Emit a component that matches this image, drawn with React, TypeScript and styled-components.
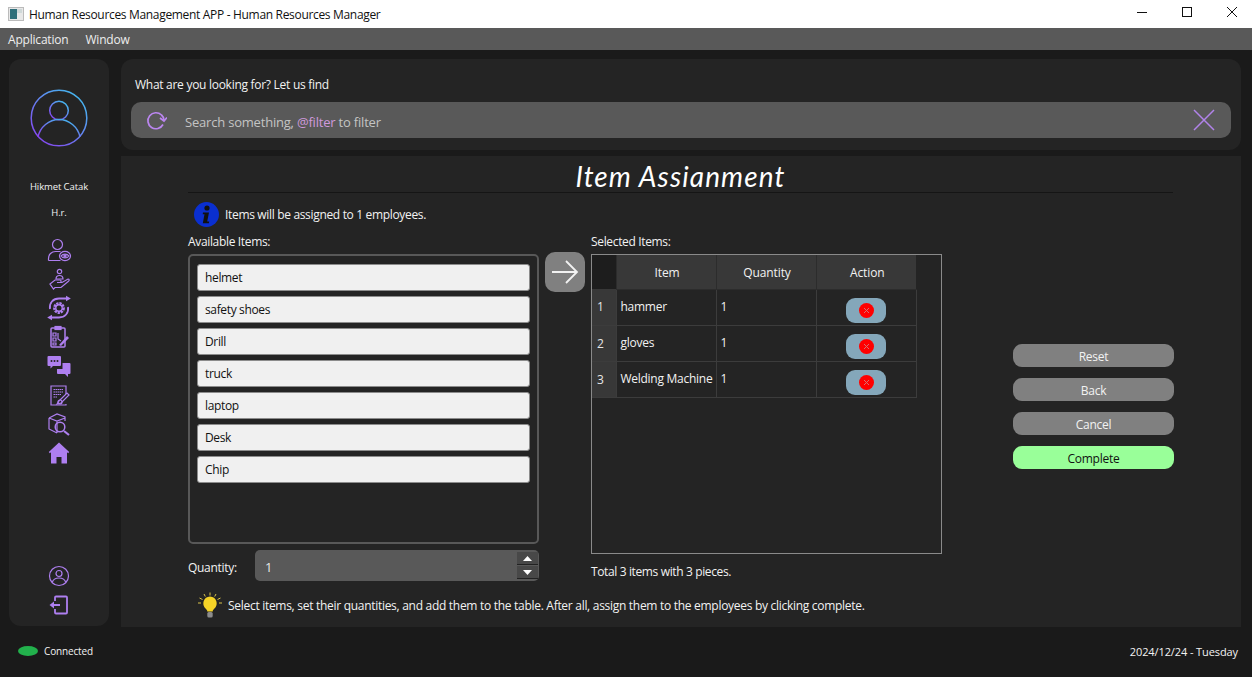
import React from "react";
import styled, { createGlobalStyle } from "styled-components";

const Global = createGlobalStyle`
  html, body { margin: 0; padding: 0; background: #1a1a1a; }
  * { box-sizing: border-box; }
  body { font-family: "Open Sans", "Liberation Sans", sans-serif; font-size: 12px; color: #f2f2f2; }
`;

const Page = styled.div`
  width: 1252px; height: 677px; display: flex; flex-direction: column; overflow: hidden; background: #1a1a1a;
`;
const TitleBar = styled.div`
  height: 28px; background: #fff; color: #111; display: flex; align-items: center; padding-left: 8px; flex: none;
`;
const TitleText = styled.span`
  margin-left: 5px; letter-spacing: -0.32px; flex: 1;
`;
const WinButton = styled.div`
  width: 40px; height: 24px; display: flex; align-items: center; justify-content: center;
`;
const WinButtons = styled.div`
  display: flex; gap: 5px; margin-bottom: 4px;
`;
const MenuBar = styled.div`
  height: 22px; background: #595959; display: flex; align-items: center; padding-left: 8px; gap: 17px; flex: none; color: #eee;
`;
const MenuItem = styled.span`letter-spacing: -0.2px;`;
const Body = styled.div`
  height: 577px; flex: none; display: flex; gap: 12px; padding: 9px 11px 0 9px;
`;
const Sidebar = styled.aside`
  width: 100px; height: 567px; background: #242424; border-radius: 12px; display: flex; flex-direction: column; align-items: center; padding-top: 30px; flex: none;
`;
const Avatar = styled.div`width: 58px; height: 58px; flex: none; display: flex;`;
const UserName = styled.div<{ $top: number }>`
  font-size: 9.5px; margin-top: ${(p) => p.$top}px; line-height: 14px; height: 14px; letter-spacing: -0.1px;
`;
const NavList = styled.nav`
  display: flex; flex-direction: column; align-items: center; margin-top: 15px;
`;
const NavIcon = styled.div`
  width: 26px; height: 29px; display: flex; align-items: center; justify-content: center; color: #ae7ff0;
`;
const BottomNav = styled.div`
  margin-top: auto; padding-bottom: 7px; display: flex; flex-direction: column; align-items: center;
`;
const MainCol = styled.div`
  flex: 1; display: flex; flex-direction: column; gap: 6px; min-width: 0;
`;
const SearchPanel = styled.section`
  height: 91px; background: #242424; border-radius: 12px; padding: 18px 10px 0; flex: none;
`;
const SearchLabel = styled.div`
  padding-left: 4px; line-height: 15px; letter-spacing: -0.28px;
`;
const SearchBar = styled.div`
  margin-top: 10px; height: 36px; background: #595959; border-radius: 10px; display: flex; align-items: center; padding: 0 16px 0 15px; color: #c4c4c4; font-size: 13px;
`;
const SearchText = styled.div`flex: 1; margin: 4px 0 0 18px; letter-spacing: -0.2px;`;
const Filter = styled.span`color: #cf99dc;`;
const Content = styled.main`
  height: 471px; background: #242424; padding: 0 68px 0 67px; display: flex; flex-direction: column; flex: none;
`;
const Heading = styled.h1`
  margin: 0; height: 37px; border-bottom: 1px solid #151515; text-align: center; font: italic 400 28px/41px Lato, "Open Sans", cursive; letter-spacing: 1.1px; color: #fff;
`;
const InfoRow = styled.div`
  display: flex; align-items: center; gap: 6px; padding-left: 6px; margin-top: 8px; height: 26px; letter-spacing: -0.33px;
`;
const Columns = styled.div`
  display: flex; align-items: flex-start; margin-top: 5px;
`;
const LeftCol = styled.div`width: 351px; flex: none;`;
const FieldLabel = styled.div`line-height: 16px; height: 20px; margin-top: 2px; letter-spacing: -0.34px;`;
const ItemList = styled.div`
  height: 290px; border: 2px solid #585858; border-radius: 5px; padding: 8px 7px; display: flex; flex-direction: column; gap: 5px;
`;
const ListItem = styled.div`
  height: 27px; background: #f0f0f0; color: #111; border: 1px solid #8c8c8c; border-radius: 3px; padding-left: 7px; line-height: 25px; flex: none; letter-spacing: -0.35px;
`;
const QuantityRow = styled.div`
  margin-top: 6px; display: flex; align-items: center; height: 31px;
`;
const QuantityLabel = styled.span`width: 67px; padding-top: 3px; letter-spacing: -0.3px;`;
const Spin = styled.div`
  flex: 1; height: 31px; background: #595959; border-radius: 5px; display: flex; align-items: center; padding-left: 10px; font-size: 13px; color: #e8e8e8; justify-content: space-between;
`;
const SpinValue = styled.span`padding-top: 2px;`;
const SpinButtons = styled.div`display: flex; flex-direction: column; gap: 1px; padding-right: 1px;`;
const SpinButton = styled.div`
  width: 21px; height: 13px; background: #484848; border-bottom: 1px solid #222; display: flex; align-items: center; justify-content: center;
`;
const ArrowCol = styled.div`width: 52px; flex: none; display: flex; justify-content: center; padding-top: 20px;`;
const ArrowButton = styled.div`
  width: 40px; height: 40px; border-radius: 10px; background: #808080; display: flex; align-items: center; justify-content: center;
`;
const MidCol = styled.div`width: 351px; flex: none;`;
const TableFrame = styled.div`height: 300px; border: 1px solid #8a8a8a;`;
const Grid = styled.table`
  border-collapse: collapse; table-layout: fixed; width: 324px;
`;
const CornerCell = styled.th`width: 24px; height: 34px; background: #1d1d1d; padding: 0; border: 0;`;
const HeadCell = styled.th`
  width: 100px; height: 34px; background: #383838; font-weight: 400; padding: 1px 0 0 2px; border-left: 1px solid #2c2c2c; border-bottom: 1px solid #2c2c2c; letter-spacing: -0.1px;
`;
const RowHead = styled.th`
  background: #383838; font-weight: 400; text-align: left; padding: 0 0 0 5px; height: 36px; border-bottom: 1px solid #3c3c3c; color: #e6e6e6;
`;
const Cell = styled.td`
  padding: 0 0 1px 4px; height: 36px; border: 1px solid #3c3c3c; white-space: nowrap; letter-spacing: -0.27px; overflow: hidden;
`;
const ActionCell = styled.td`
  padding: 8px 0 0; border: 1px solid #3c3c3c; height: 36px; vertical-align: top;
`;
const RemoveButton = styled.div`
  width: 40px; height: 25px; margin: 0 auto; background: #84a7ba; border-radius: 9px; display: flex; align-items: center; justify-content: center;
`;
const Total = styled.div`margin-top: 10px; line-height: 16px; letter-spacing: -0.37px;`;
const ActionCol = styled.div`
  margin: 0 -1px 0 auto; width: 161px; display: flex; flex-direction: column; gap: 11px; padding-top: 112px;
`;
const Action = styled.div<{ $primary?: boolean }>`
  height: 23px; border-radius: 9px; background: ${(p) => (p.$primary ? "#99ff99" : "#808080")}; color: ${(p) => (p.$primary ? "#111" : "#f2f2f2")}; text-align: center; line-height: 25px; letter-spacing: -0.25px;
`;
const HintRow = styled.div`
  display: flex; align-items: center; gap: 5px; padding-left: 9px; margin-top: 9px; height: 30px; letter-spacing: -0.29px;
`;
const StatusBar = styled.footer`
  flex: 1; display: flex; align-items: center; justify-content: space-between; padding: 0 14px 2px 18px; font-size: 11px;
`;
const Connected = styled.div`display: flex; align-items: center; gap: 6px; font-size: 10px; letter-spacing: -0.15px;`;
const Led = styled.div`width: 20px; height: 10px; border-radius: 50%; background: #22b14c;`;
const DateText = styled.span`letter-spacing: -0.1px;`;

const S = { fill: "none", stroke: "currentColor", strokeWidth: 1.2 } as const;

const PersonEye = () => (
  <svg width="26" height="26" viewBox="0 0 26 26" {...S}>
    <circle cx="11.500" cy="7.500" r="5" /><path d="M2.500 23.500v-2c0-4 3-7 7-7h5M2.500 23.500h12" />
    <ellipse cx="19" cy="19" rx="5.500" ry="4.600" /><path d="M15 19c2-2.600 6-2.600 8 0-2 2.600-6 2.600-8 0z" /><circle cx="19" cy="19" r="1.100" fill="currentColor" />
  </svg>
);
const HandPerson = () => (
  <svg width="24" height="24" viewBox="0 0 24 24" {...S}>
    <circle cx="12.500" cy="4.500" r="2.200" /><path d="M9 12c0-2.500 1.500-3.500 3.500-3.500S16 9.500 16 12z" />
    <path d="M3 17l5-4h5c1.500 0 1.500 2.500 0 2.500h-3 5l6-3.500c1.500 0 1.500 1.500.5 2.300L14 20.500H8L6.500 22z" />
  </svg>
);
const GearArrows = () => (
  <svg width="26" height="26" viewBox="0 0 26 26">
    <circle cx="13" cy="13" r="4.500" fill="none" stroke="currentColor" strokeWidth="2.800" strokeDasharray="2.200 .8" />
    <circle cx="13" cy="13" r="3.200" fill="none" stroke="currentColor" strokeWidth="1.400" />
    <path d="M4 14C3 8 7 3.500 13 3.500h8" fill="none" stroke="currentColor" strokeWidth="1.800" />
    <path d="M20 .8l4.800 2.700L20 6.200z" fill="currentColor" />
    <path d="M22 12c1 6-3 10.500-9 10.500H5" fill="none" stroke="currentColor" strokeWidth="1.800" />
    <path d="M6 19.800L1.200 22.500 6 25.200z" fill="currentColor" />
  </svg>
);
const Clipboard = () => (
  <svg width="24" height="24" viewBox="0 0 24 24" {...S}>
    <rect x="4" y="3" width="14" height="19" rx="1" strokeWidth="1.500" /><rect x="8" y="1.500" width="6" height="3" fill="currentColor" />
    <path d="M6 8h3v3H6zM6 13h3v3H6zM6 18h3v2H6z" strokeWidth="1.200" /><path d="M11 8v6l3 2" />
    <path d="M12 20l8-9 2 2-8 8z" fill="currentColor" stroke="none" />
  </svg>
);
const Chat = () => (
  <svg width="24" height="22" viewBox="0 0 24 22">
    <path fill="currentColor" d="M1.500 1h11.500a1 1 0 0 1 1 1v8a1 1 0 0 1-1 1H6l-2.500 2.500V11h-2a1 1 0 0 1-1-1V2a1 1 0 0 1 1-1z" />
    <circle cx="4.500" cy="6" r="1" fill="#242424" /><circle cx="7.500" cy="6" r="1" fill="#242424" /><circle cx="10.500" cy="6" r="1" fill="#242424" />
    <path fill="currentColor" d="M15.500 8h7a1 1 0 0 1 1 1v9a1 1 0 0 1-1 1h-1.500v3l-3-3H11a1 1 0 0 1-1-1v-4h5.500z" />
  </svg>
);
const DocPen = () => (
  <svg width="24" height="24" viewBox="0 0 24 24" {...S}>
    <path d="M19 11V3H4v19h15v-1" strokeWidth="1.200" /><path d="M6.500 6.500h10M6.500 9h10M6.500 11.500h8M6.500 14h4" strokeDasharray="1.500 .5" />
    <path d="M10 21l2-3 8-8 2 2-8 8z" /><circle cx="13" cy="19" r="2" />
  </svg>
);
const BoxSearch = () => (
  <svg width="24" height="24" viewBox="0 0 24 24" {...S}>
    <path d="M2 6l8-4 8 3v4M2 6v11l8 4M2 6l8 3 8-3M10 9v12" />
    <circle cx="13" cy="15" r="4.800" strokeWidth="1.500" /><path d="M17 19l5 4" strokeWidth="2.200" />
  </svg>
);
const Home = () => (
  <svg width="22" height="22" viewBox="0 0 22 22">
    <path fill="currentColor" d="M11 .5L.8 10l1 1.200L3 10.200V21.500h5.500V15h5v6.500H19V10.200l1.200 1 1-1.200z" />
  </svg>
);
const Profile = () => (
  <svg width="22" height="22" viewBox="0 0 22 22" {...S}>
    <circle cx="11" cy="11" r="9.500" /><circle cx="11" cy="8.500" r="3" /><path d="M4.200 17.500c1-3.500 3.500-4.500 6.800-4.500s5.800 1 6.800 4.500" />
  </svg>
);
const Logout = () => (
  <svg width="22" height="22" viewBox="0 0 22 22">
    <path fill="none" stroke="currentColor" strokeWidth="1.800" d="M7 7V3.500a1 1 0 0 1 1-1h10a1 1 0 0 1 1 1v15a1 1 0 0 1-1 1H8a1 1 0 0 1-1-1V15" />
    <path fill="none" stroke="currentColor" strokeWidth="2" d="M3 11h9" />
    <path fill="currentColor" d="M6 7.500L1.500 11 6 14.500z" />
  </svg>
);

const AvatarIcon = () => (
  <svg width="58" height="58" viewBox="0 0 58 58" fill="none">
    <defs>
      <linearGradient id="av" x1="0.1" y1="1" x2="0.9" y2="0">
        <stop offset="0" stopColor="#8a3ff0" /><stop offset="1" stopColor="#3fc0ee" />
      </linearGradient>
    </defs>
    <circle cx="29" cy="29" r="27.800" stroke="url(#av)" strokeWidth="1.500" />
    <circle cx="29" cy="21.500" r="9.300" stroke="url(#av)" strokeWidth="1.500" />
    <path d="M8 48c2-10 11-17.500 21-17.500S48 38 50 48" stroke="url(#av)" strokeWidth="1.500" />
  </svg>
);
const Refresh = () => (
  <svg width="21" height="21" viewBox="0 0 21 21" fill="none" stroke="#bb86f0" strokeWidth="1.700">
    <path d="M17 14.500A8 8 0 1 1 15.500 5c1.500 1.300 2.500 3 2.500 5.500" />
    <path d="M14 8l4 3 3-3.500" />
  </svg>
);
const CloseX = () => (
  <svg width="22" height="22" viewBox="0 0 22 22" stroke="#b183ea" strokeWidth="1.500"><path d="M1 1l20 20M21 1L1 21" /></svg>
);
const InfoIcon = () => (
  <svg width="25" height="25" viewBox="0 0 25 25">
    <circle cx="12.500" cy="12.500" r="12.500" fill="#0a2fd0" />
    <circle cx="13" cy="6" r="2.600" fill="#111" />
    <path d="M9 10.500h6l-1.800 9h2l-.4 1.800H8.800l1.700-9H8.700z" fill="#111" />
  </svg>
);
const Arrow = () => (
  <svg width="28" height="26" viewBox="0 0 28 26" fill="none" stroke="#f2f2f2" strokeWidth="1.800"><path d="M1 13h25M15 2l11 11-11 11" /></svg>
);
const RemoveIcon = () => (
  <svg width="15" height="15" viewBox="0 0 15 15">
    <circle cx="7.500" cy="7.500" r="7.500" fill="#ff0000" />
    <path d="M5 5l5 5M10 5l-5 5" stroke="#d87070" strokeWidth="1" />
  </svg>
);
const Bulb = () => (
  <svg width="26" height="26" viewBox="0 0 26 26">
    <g stroke="#d8c24a" strokeWidth="1">
      <path d="M13 .5v3M7 2l1.300 2.500M19 2l-1.300 2.500M2.500 6l3 1.500M23.500 6l-3 1.500M1 11h3M25 11h-3" />
    </g>
    <path d="M13 4.500a7 7 0 0 0-4 12.500c1 1 1.300 1.800 1.300 2.500h5.400c0-.7.3-1.500 1.300-2.500a7 7 0 0 0-4-12.500z" fill="#f5d327" />
    <rect x="10.300" y="20" width="5.400" height="5.500" rx="1.500" fill="#8c8c8c" />
  </svg>
);
const AppIcon = () => (
  <svg width="16" height="14" viewBox="0 0 16 14">
    <rect x=".5" y=".5" width="15" height="13" fill="#e8e8e8" stroke="#bbb" />
    <rect x="2" y="2" width="7" height="10" fill="#2f6f7a" /><rect x="9" y="2" width="5" height="4" fill="#cfd8d8" />
  </svg>
);

const navIcons = [PersonEye, HandPerson, GearArrows, Clipboard, Chat, DocPen, BoxSearch, Home];
const items = ["helmet", "safety shoes", "Drill", "truck", "laptop", "Desk", "Chip"];
const selected = ["hammer", "gloves", "Welding Machine"];

export default function App() {
  return (
    <Page>
      <Global />
      <TitleBar>
        <AppIcon />
        <TitleText>Human Resources Management APP - Human Resources Manager</TitleText>
        <WinButtons>
          <WinButton><svg width="10" height="10" stroke="#111"><path d="M0 5.500h10" /></svg></WinButton>
          <WinButton><svg width="10" height="10" fill="none" stroke="#111"><rect x=".5" y=".5" width="9" height="9" /></svg></WinButton>
          <WinButton><svg width="10" height="10" stroke="#111"><path d="M0 0l10 10M10 0L0 10" /></svg></WinButton>
        </WinButtons>
      </TitleBar>
      <MenuBar><MenuItem>Application</MenuItem><MenuItem>Window</MenuItem></MenuBar>
      <Body>
        <Sidebar>
          <Avatar><AvatarIcon /></Avatar>
          <UserName $top={33}>Hikmet Catak</UserName>
          <UserName $top={12}>H.r.</UserName>
          <NavList>
            {navIcons.map((I, i) => <NavIcon key={i}><I /></NavIcon>)}
          </NavList>
          <BottomNav>
            <NavIcon><Profile /></NavIcon>
            <NavIcon><Logout /></NavIcon>
          </BottomNav>
        </Sidebar>
        <MainCol>
          <SearchPanel>
            <SearchLabel>What are you looking for? Let us find</SearchLabel>
            <SearchBar>
              <Refresh />
              <SearchText>Search something, <Filter>@filter</Filter> to filter</SearchText>
              <CloseX />
            </SearchBar>
          </SearchPanel>
          <Content>
            <Heading>Item Assianment</Heading>
            <InfoRow><InfoIcon />Items will be assigned to 1 employees.</InfoRow>
            <Columns>
              <LeftCol>
                <FieldLabel>Available Items:</FieldLabel>
                <ItemList>{items.map((t) => <ListItem key={t}>{t}</ListItem>)}</ItemList>
                <QuantityRow>
                  <QuantityLabel>Quantity:</QuantityLabel>
                  <Spin>
                    <SpinValue>1</SpinValue>
                    <SpinButtons>
                      <SpinButton><svg width="9" height="5" fill="#fff"><path d="M4.500 0L9 5H0z" /></svg></SpinButton>
                      <SpinButton><svg width="9" height="5" fill="#fff"><path d="M0 0h9L4.500 5z" /></svg></SpinButton>
                    </SpinButtons>
                  </Spin>
                </QuantityRow>
              </LeftCol>
              <ArrowCol><ArrowButton><Arrow /></ArrowButton></ArrowCol>
              <MidCol>
                <FieldLabel>Selected Items:</FieldLabel>
                <TableFrame>
                  <Grid>
                    <thead>
                      <tr><CornerCell /><HeadCell>Item</HeadCell><HeadCell>Quantity</HeadCell><HeadCell>Action</HeadCell></tr>
                    </thead>
                    <tbody>
                      {selected.map((s, i) => (
                        <tr key={s}>
                          <RowHead>{i + 1}</RowHead>
                          <Cell>{s}</Cell>
                          <Cell>1</Cell>
                          <ActionCell><RemoveButton><RemoveIcon /></RemoveButton></ActionCell>
                        </tr>
                      ))}
                    </tbody>
                  </Grid>
                </TableFrame>
                <Total>Total 3 items with 3 pieces.</Total>
              </MidCol>
              <ActionCol>
                <Action>Reset</Action>
                <Action>Back</Action>
                <Action>Cancel</Action>
                <Action $primary>Complete</Action>
              </ActionCol>
            </Columns>
            <HintRow><Bulb />Select items, set their quantities, and add them to the table. After all, assign them to the employees by clicking complete.</HintRow>
          </Content>
        </MainCol>
      </Body>
      <StatusBar>
        <Connected><Led />Connected</Connected>
        <DateText>2024/12/24 - Tuesday</DateText>
      </StatusBar>
    </Page>
  );
}
